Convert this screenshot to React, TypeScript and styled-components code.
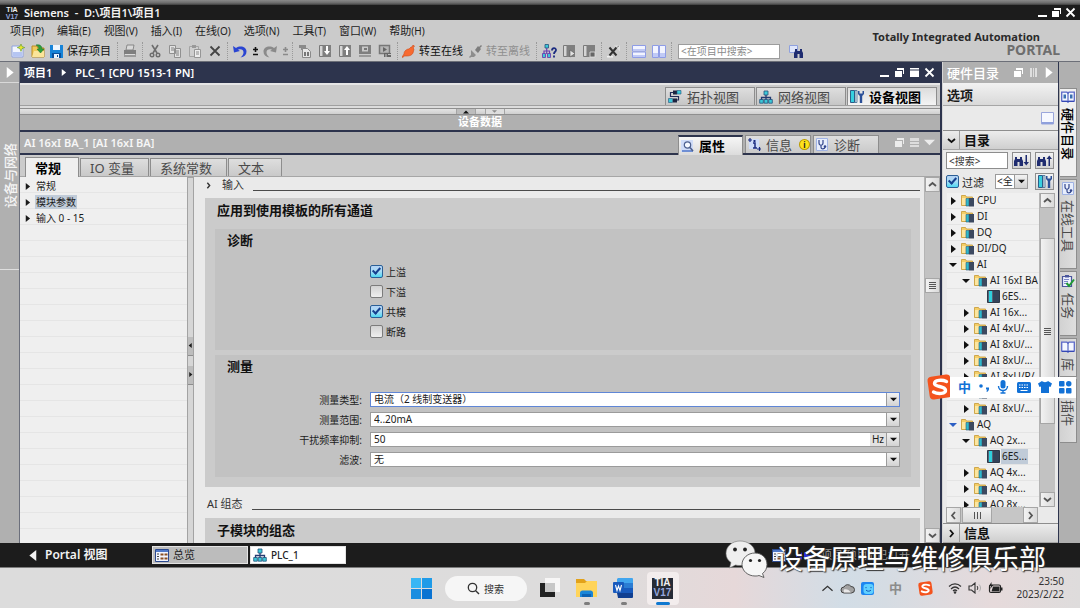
import React from 'react';
import styled, { createGlobalStyle, css } from 'styled-components';

const FONT = '"Noto Sans", "Open Sans", "Noto Sans CJK SC", sans-serif';
const NAVY = '#2d344d';

const GlobalStyle = createGlobalStyle`
  *, *::before, *::after { box-sizing: border-box; }
  html, body { margin: 0; padding: 0; }
  body { font-family: ${FONT}; font-size: 10px; color: #1c1c1c; background: #dcdcdc; }
  button, input, select { font-family: inherit; font-size: inherit; color: inherit; margin: 0; }
  button { padding: 0; border: 0; background: none; cursor: pointer; }
  svg { display: block; flex: none; }
  ul { list-style: none; margin: 0; padding: 0; }
  h1, h2, h3 { margin: 0; font-weight: 700; }
`;

/* ---------- shell ---------- */

const Screen = styled.div`
  position: relative;
  display: flex;
  flex-direction: column;
  height: 100vh;
  min-width: 960px;
  overflow: hidden;
`;

const DesktopEdge = styled.div`
  flex: none;
  height: 5px;
  background: linear-gradient(#8a8a8a, #6a6a6a 60%, #3c3c3c);
`;

const TitleBar = styled.header`
  flex: none;
  display: flex;
  align-items: center;
  gap: 5px;
  height: 15px;
  padding: 0 4px 0 5px;
  background: #1c1c1c;
  color: #f2f2f2;
`;

const WindowTitle = styled.h1`
  flex: 1;
  font-size: 11px;
  line-height: 15px;
  font-weight: 600;
  white-space: pre;
`;

const WindowButtons = styled.div`
  display: flex;
  align-items: center;
  gap: 3px;
  color: #fff;
`;

const TopBar = styled.div`
  flex: none;
  display: flex;
  justify-content: space-between;
  height: 42px;
  background: #cbcbcb;
  border-bottom: 1px solid #6c6f78;
`;

const TopLeft = styled.div`
  display: flex;
  flex-direction: column;
`;

const MenuRow = styled.nav`
  display: flex;
  align-items: center;
  gap: 13px;
  height: 21px;
  padding: 0 10px;
`;

const MenuItem = styled.button`
  font-size: 11px;
  line-height: 16px;
  white-space: nowrap;
  small { font-size: 10px; }
`;

const ToolRow = styled.div`
  display: flex;
  align-items: center;
  height: 20px;
  padding-left: 8px;
`;

const ToolButton = styled.button<{ $narrow?: boolean }>`
  display: flex;
  align-items: center;
  justify-content: center;
  width: ${p => (p.$narrow ? 10 : 20)}px;
  height: 18px;
`;

const ToolText = styled.button<{ $off?: boolean }>`
  display: flex;
  align-items: center;
  gap: 4px;
  font-size: 11px;
  line-height: 16px;
  padding: 0 4px 0 2px;
  white-space: nowrap;
  color: ${p => (p.$off ? '#8f8f8f' : '#111')};
`;

const ToolSep = styled.span`
  width: 1px;
  height: 18px;
  margin: 0 2px;
  border-left: 1px dotted #9a9a9a;
`;

const ProjectSearch = styled.input`
  width: 102px;
  height: 15px;
  margin: 0 6px 0 4px;
  padding: 0 2px;
  border: 1px solid #9c9c9c;
  background: #fff;
  &::placeholder { color: #8a8a8a; opacity: 1; }
`;

const Brand = styled.div`
  display: flex;
  flex-direction: column;
  padding: 10px 20px 0 0;
  white-space: nowrap;
`;

const BrandName = styled.span`
  padding-right: 20px;
  font-size: 11px;
  line-height: 14px;
  font-weight: 700;
  color: #2a2a2a;
`;

const BrandPortal = styled.span`
  align-self: flex-end;
  font-size: 14px;
  line-height: 12px;
  font-weight: 700;
  color: #6e6e6e;
`;

const Workspace = styled.div`
  flex: 1;
  min-height: 0;
  display: flex;
`;

/* ---------- left rail ---------- */

const LeftRail = styled.aside`
  flex: none;
  display: flex;
  flex-direction: column;
  width: 20px;
  background: #b0b0b0;
  border-right: 1px solid #6b6f7c;
`;

const RailOpen = styled.button`
  display: flex;
  align-items: center;
  justify-content: center;
  height: 21px;
  color: #fff;
  border-bottom: 1px solid #d9d9d9;
`;

const RailTab = styled.button`
  display: flex;
  align-items: center;
  justify-content: center;
  height: 187px;
  color: #f4f4f4;
  border-bottom: 1px solid #dedede;
  span {
    writing-mode: vertical-rl;
    text-orientation: sideways;
    transform: rotate(180deg);
    font-size: 13px;
    line-height: 16px;
    font-weight: 500;
  }
`;

/* ---------- centre ---------- */

const Center = styled.main`
  flex: 1;
  min-width: 0;
  display: flex;
  flex-direction: column;
  border-right: 2px solid ${NAVY};
`;

const EditorHeader = styled.div`
  flex: none;
  display: flex;
  align-items: center;
  justify-content: space-between;
  height: 21px;
  padding: 0 5px 0 4px;
  background: ${NAVY};
  color: #fff;
`;

const Crumbs = styled.div`
  display: flex;
  align-items: center;
  gap: 8px;
  font-size: 11px;
  line-height: 16px;
  font-weight: 600;
`;

const IconSet = styled.div<{ $gap?: number }>`
  display: flex;
  align-items: center;
  gap: ${p => p.$gap ?? 4}px;
`;

const ViewBar = styled.div`
  flex: none;
  display: flex;
  align-items: flex-end;
  justify-content: flex-end;
  gap: 1px;
  height: 23px;
  padding-right: 3px;
  background: #cbcbcb;
  border-top: 2px solid #e6e6e6;
  border-bottom: 1px solid #a0a0a0;
`;

const ViewTab = styled.button<{ $on?: boolean }>`
  display: flex;
  align-items: center;
  gap: 5px;
  width: 90px;
  height: 18px;
  padding-left: 2px;
  font-size: 13px;
  line-height: 16px;
  white-space: nowrap;
  border: 1px solid #8d8d8d;
  border-bottom: 0;
  background: ${p => (p.$on ? 'linear-gradient(#dcdcdc, #f4f4f4)' : 'linear-gradient(#dedede, #c6c6c6)')};
  color: ${p => (p.$on ? '#000' : '#4a4a4a')};
  font-weight: ${p => (p.$on ? 700 : 400)};
`;

const SplitBar = styled.div`
  flex: none;
  display: flex;
  justify-content: center;
  gap: 9px;
  height: 9px;
  padding-top: 3px;
  background: linear-gradient(#dcdcdc 2px, #8f8f8f 2px, #8f8f8f 3px, #e4e4e4 3px, #cfcfcf);
  border-bottom: 1px solid #8f8f8f;
`;

const SplitGrip = styled.button<{ $dim?: boolean }>`
  display: flex;
  align-items: center;
  justify-content: center;
  width: 20px;
  color: ${p => (p.$dim ? '#8c8c8c' : '#111')};
  background: ${p => (p.$dim ? '#dedede' : '#bdbdbd')};
  border: 1px solid #a4a4a4;
  border-width: 0 1px;
`;

const DataBar = styled.div`
  flex: none;
  height: 15px;
  background: #b0b0b0;
  color: #fff;
  font-size: 11px;
  line-height: 14px;
  font-weight: 700;
  text-align: center;
`;

const InspectorHeader = styled.div`
  flex: none;
  display: flex;
  align-items: flex-end;
  height: 25px;
  padding: 0 5px 0 4px;
  background: #b0b0b0;
  border-top: 2px solid ${NAVY};
  border-bottom: 2px solid ${NAVY};
`;

const InspectorTitle = styled.h2`
  flex: 1;
  align-self: center;
  font-size: 11px;
  line-height: 16px;
  font-weight: 600;
  color: #f6f6f6;
`;

const InspectorTabs = styled.div`
  display: flex;
  align-items: flex-end;
  gap: 2px;
  margin-right: 15px;
`;

const InspectorTab = styled.button<{ $on?: boolean }>`
  display: flex;
  align-items: center;
  gap: 5px;
  width: ${p => (p.$on ? 65 : 66)}px;
  height: 18px;
  padding-left: 2px;
  font-size: 13px;
  line-height: 16px;
  white-space: nowrap;
  border: 1px solid #8d8d8d;
  border-bottom: 0;
  color: #4a4a4a;
  background: linear-gradient(#dedede, #c9c9c9);
  ${p => p.$on && css`
    height: 20px;
    margin-bottom: -2px;
    border-top: 2px solid ${NAVY};
    color: #000;
    font-weight: 700;
    background: linear-gradient(#f6f6f6, #dcdcdc);
  `}
`;

const InfoDot = styled.span`
  display: flex;
  align-items: center;
  justify-content: center;
  width: 11px;
  height: 11px;
  margin-left: 2px;
  border-radius: 50%;
  border: 1px solid #b99a00;
  background: #ffe11a;
  color: #222;
  font-size: 8px;
  line-height: 8px;
  font-weight: 700;
`;

const HeaderTools = styled(IconSet)`
  align-self: center;
  color: #ececec;
`;

const NavTabs = styled.div`
  flex: none;
  display: flex;
  align-items: flex-end;
  gap: 1px;
  height: 22px;
  padding-left: 5px;
  background: #cbcbcb;
  border-bottom: 1px solid #a6a6a6;
`;

const NavTab = styled.button<{ $on?: boolean }>`
  height: 18px;
  min-width: 54px;
  padding: 0 14px 0 9px;
  font-size: 13px;
  line-height: 16px;
  text-align: left;
  white-space: nowrap;
  border: 1px solid #8d8d8d;
  border-bottom: 0;
  color: #4a4a4a;
  background: linear-gradient(#dedede, #c9c9c9);
  ${p => p.$on && css`
    height: 20px;
    margin-bottom: -1px;
    color: #000;
    font-weight: 700;
    background: #efefef;
  `}
`;

const InspectorBody = styled.div`
  flex: 1;
  min-height: 0;
  display: flex;
  background: #eaeaea;
`;

const NavTree = styled.ul`
  flex: none;
  width: 167px;
  padding-top: 1px !important;
  background: repeating-linear-gradient(#efefef 0, #efefef 15px, #e5e5e5 15px, #e5e5e5 16px);
`;

const NavItem = styled.li`
  display: flex;
  align-items: center;
  gap: 4px;
  height: 16px;
  padding-left: 4px;
`;

const NavLabel = styled.button<{ $on?: boolean }>`
  padding: 0 1px;
  line-height: 14px;
  white-space: nowrap;
  background: ${p => (p.$on ? '#c0cbd8' : 'transparent')};
`;

const SideSplit = styled.div`
  flex: none;
  display: flex;
  flex-direction: column;
  justify-content: center;
  gap: 10px;
  width: 7px;
  border: 1px solid #a3a3a3;
  border-width: 1px 1px 0;
  background: #d6d6d6;
`;

const SideGrip = styled.button`
  display: flex;
  align-items: center;
  justify-content: center;
  height: 19px;
  border-bottom: 1px solid #8d8d8d;
  background: #bdbdbd;
`;

const Page = styled.div`
  flex: 1;
  min-width: 0;
  overflow: hidden;
  padding: 0 4px 0 11px;
`;

const SectionHead = styled.div<{ $later?: boolean }>`
  display: flex;
  align-items: center;
  height: 16px;
  margin: ${p => (p.$later ? '9px 0 6px' : '0 0 5px')};
  padding-left: 2px;
  color: #333;
  font-size: 11px;
  line-height: 16px;
  white-space: nowrap;
  svg { margin: 0 10px 0 -2px; }
`;

const Rule = styled.span`
  flex: 1;
  height: 11px;
  margin-left: 9px;
  border-bottom: 1px solid #4a4a4a;
`;

const Panel = styled.section`
  padding: 0 9px 10px 10px;
  background: #cbcbcb;
`;

const PanelTitle = styled.h2`
  padding: 0 2px 7px;
  font-size: 13px;
  line-height: 24px;
  white-space: nowrap;
  color: #111;
`;

const SubPanel = styled.div`
  padding-bottom: 9px;
  background: #c2c2c2;
  & + & { margin-top: 5px; padding-bottom: 8px; }
`;

const SubTitle = styled.h3`
  padding-left: 12px;
  font-size: 13px;
  line-height: 22px;
  color: #111;
`;

const CheckList = styled.div`
  padding: 10px 0 0 155px;
`;

const CheckLabel = styled.label`
  display: flex;
  align-items: center;
  gap: 3px;
  height: 20px;
`;

const CheckBox = styled.input.attrs({ type: 'checkbox' })`
  appearance: none;
  display: flex;
  justify-content: center;
  flex: none;
  width: 13px;
  height: 13px;
  border: 1px solid #7c7c7c;
  border-radius: 2px;
  background: linear-gradient(#d2d2d2, #efefef);
  &:checked {
    border-color: #2b5f96;
    background: linear-gradient(#b5d3f5, #a8dcf5 50%, #4fd8f2);
  }
  &:checked::after {
    content: '';
    width: 5px;
    height: 8px;
    border: solid #17408f;
    border-width: 0 2px 2px 0;
    transform: rotate(42deg);
  }
`;

const Form = styled.div`
  padding: 12px 11px 0 0;
`;

const FormRow = styled.div`
  display: grid;
  grid-template-columns: 147px 1fr;
  gap: 8px;
  align-items: center;
  height: 20px;
  label { text-align: right; }
`;

const SelectBox = styled.div<{ $focus?: boolean }>`
  display: flex;
  align-items: stretch;
  height: 15px;
  background: #fff;
  border: 1px solid ${p => (p.$focus ? '#5f86d6' : '#9b9b9b')};
`;

const Select = styled.select`
  appearance: none;
  flex: 1;
  min-width: 0;
  padding: 0 3px;
  border: 0;
  outline: 0;
  background: transparent;
  line-height: 13px;
`;

const Unit = styled.span`
  width: 16px;
  background: #e2e2e2;
  line-height: 13px;
  text-align: center;
`;

const DropArrow = styled.span`
  display: flex;
  align-items: center;
  justify-content: center;
  flex: none;
  width: 13px;
  border-left: 1px solid #9b9b9b;
  background: linear-gradient(#f2f2f2, #d3d3d3);
  color: #111;
`;

/* ---------- scroll bars ---------- */

const VScroll = styled.div`
  flex: none;
  display: flex;
  flex-direction: column;
  width: 16px;
  background: #c2c2c2;
  border-left: 1px solid #b4b4b4;
`;

const ScrollSpace = styled.span<{ $size?: number }>`
  flex: ${p => (p.$size ? `0 0 ${p.$size}px` : '1')};
`;

const ScrollButton = styled.button<{ $size?: number }>`
  display: flex;
  align-items: center;
  justify-content: center;
  flex: none;
  width: 15px;
  height: ${p => p.$size ?? 15}px;
  border: 1px solid #a6a6a6;
  background: linear-gradient(90deg, #f2f2f2, #dadada);
  color: #555;
`;

const HScroll = styled.div`
  flex: none;
  display: flex;
  width: 92px;
  height: 16px;
  background: #c6c6c6;
`;

const HThumb = styled.button`
  display: flex;
  align-items: center;
  justify-content: center;
  width: 30px;
  margin: 0 auto 0 1px;
  border: 1px solid #a6a6a6;
  background: linear-gradient(#f2f2f2, #dadada);
  color: #555;
`;

/* ---------- right catalogue ---------- */

const Catalog = styled.aside`
  flex: none;
  display: flex;
  flex-direction: column;
  width: 117px;
  background: #eaeaea;
  border-left: 1px solid #d5d5d5;
  border-right: 1px solid ${NAVY};
`;

const CatalogHeader = styled.div`
  flex: none;
  display: flex;
  align-items: center;
  justify-content: space-between;
  height: 21px;
  padding: 0 4px;
  background: #b0b0b0;
  color: #fff;
  font-size: 13px;
  line-height: 18px;
  font-weight: 500;
`;

const OptionBar = styled.div`
  flex: none;
  height: 23px;
  padding-left: 4px;
  font-size: 13px;
  line-height: 24px;
  font-weight: 700;
  background: linear-gradient(#f2f2f2, #d9d9d9);
  border-bottom: 1px solid #a6a6a6;
`;

const OptionTools = styled.div`
  flex: none;
  display: flex;
  align-items: center;
  justify-content: flex-end;
  height: 24px;
  padding-right: 4px;
`;

const FoldHeader = styled.button`
  flex: none;
  display: flex;
  align-items: stretch;
  width: 100%;
  height: 20px;
  font-size: 13px;
  line-height: 18px;
  font-weight: 700;
  background: linear-gradient(#ececec, #cfcfcf);
  border-top: 1px solid #8d8d8d;
  border-bottom: 1px solid #a6a6a6;
  color: #111;
`;

const FoldMark = styled.span`
  display: flex;
  align-items: center;
  justify-content: center;
  width: 17px;
  margin-right: 4px;
  border-right: 1px solid #9d9d9d;
`;

const CatalogRow = styled.div<{ $low?: boolean }>`
  flex: none;
  display: flex;
  align-items: center;
  gap: 4px;
  height: ${p => (p.$low ? 16 : 21)}px;
  padding: 0 4px 0 3px;
`;

const CatalogSearch = styled.input`
  flex: 1;
  min-width: 0;
  height: 17px;
  padding: 0 2px;
  border: 1px solid #8d8d8d;
  background: #fff;
  &::placeholder { color: #333; opacity: 1; }
`;

const SmallButton = styled.button`
  display: flex;
  align-items: center;
  justify-content: center;
  flex: none;
  width: 19px;
  height: 17px;
  border: 1px solid #8d8d8d;
  background: linear-gradient(#f4f4f4, #d3d3d3);
`;

const FilterLabel = styled.label`
  flex: 1;
  display: flex;
  align-items: center;
  gap: 3px;
  font-size: 11px;
  white-space: nowrap;
`;

const FilterSelect = styled(SelectBox)`
  flex: none;
  width: 33px;
  margin-right: 3px;
  select { padding: 0 0 0 1px; }
`;

const TreeWrap = styled.div`
  flex: 1;
  min-height: 0;
  display: flex;
  padding: 1px 3px 0 4px;
`;

const DeviceTree = styled.ul`
  flex: 1;
  min-width: 0;
  overflow: hidden;
  background: #f0f0f0;
`;

const DeviceRow = styled.li<{ $level: number }>`
  display: flex;
  align-items: center;
  height: 16px;
  padding-left: ${p => 2 + p.$level * 13}px;
  border-bottom: 1px solid #e4e4e4;
`;

const Toggle = styled.button<{ $blue?: boolean }>`
  display: flex;
  align-items: center;
  justify-content: center;
  flex: none;
  width: 8px;
  height: 12px;
  margin-right: 4px;
  color: ${p => (p.$blue ? '#2c5fc4' : '#111')};
`;

const DeviceName = styled.span<{ $on?: boolean }>`
  padding: 0 1px;
  margin-left: 1px;
  line-height: 15px;
  white-space: nowrap;
  background: ${p => (p.$on ? '#c0cbd8' : 'transparent')};
`;

const TaskCards = styled.aside`
  flex: none;
  display: flex;
  flex-direction: column;
  gap: 2px;
  width: 21px;
  padding: 26px 3px 0 1px;
  background: #b0b0b0;
`;

const TaskCard = styled.button<{ $on?: boolean; $short?: boolean }>`
  display: flex;
  flex-direction: column;
  align-items: center;
  gap: 5px;
  padding: 2px 0 ${p => (p.$short ? 5 : 16)}px;
  border: 1px solid #8d8d8d;
  border-left: 0;
  background: ${p => (p.$on ? '#f0f0f0' : 'linear-gradient(90deg, #d2d2d2, #dedede)')};
  color: ${p => (p.$on ? '#000' : '#4a4a4a')};
  font-weight: ${p => (p.$on ? 500 : 400)};
  span {
    writing-mode: vertical-rl;
    text-orientation: sideways;
    font-size: 13px;
    line-height: 16px;
  }
`;

/* ---------- portal bar ---------- */

const PortalBar = styled.footer`
  flex: none;
  display: flex;
  align-items: center;
  height: 25px;
  padding: 0 4px 0 28px;
  background: #1c1c1c;
  border-bottom: 1px solid #7c7c7c;
  color: #f2f2f2;
`;

const PortalLink = styled.button`
  display: flex;
  align-items: center;
  gap: 6px;
  width: 124px;
  font-size: 12px;
  line-height: 16px;
  font-weight: 600;
  color: #f2f2f2;
  white-space: nowrap;
`;

const EditorTab = styled.button<{ $on?: boolean }>`
  display: flex;
  align-items: center;
  gap: 4px;
  width: 96px;
  height: 18px;
  margin-right: 2px;
  padding-left: 2px;
  border: 1px solid #e4e4e4;
  background: ${p => (p.$on ? '#fff' : '#bcbcbc')};
  color: #222;
  font-size: ${p => (p.$on ? 10 : 11)}px;
  line-height: 14px;
  font-weight: ${p => (p.$on ? 500 : 400)};
`;

const StatusText = styled.div`
  display: flex;
  align-items: center;
  gap: 10px;
  margin: 0 166px 0 auto;
  font-size: 11px;
  line-height: 16px;
  white-space: nowrap;
  color: #9a9a9a;
`;

/* ---------- Windows task bar ---------- */

const TaskBar = styled.footer`
  flex: none;
  display: grid;
  grid-template-columns: 1fr auto 1fr;
  align-items: center;
  height: 40px;
  padding: 0 16px 0 22px;
  background: linear-gradient(90deg, #dcdcdc 0%, #dddcdc 56%, #e6d8d9 68%, #d2dde6 78%, #d5dce3 82%, #e6dadb 92%, #dedcdc 100%);
`;

const Dock = styled.div`
  grid-column: 2;
  display: flex;
  align-items: center;
  gap: 9px;
`;

const DockIcon = styled.button<{ $tile?: boolean; $mark?: string }>`
  position: relative;
  display: flex;
  align-items: center;
  justify-content: center;
  width: ${p => (p.$tile ? 32 : 28)}px;
  height: 33px;
  border-radius: 4px;
  background: ${p => (p.$tile ? '#f3eded' : 'transparent')};
  &::after {
    content: '';
    position: absolute;
    bottom: 0;
    width: ${p => (p.$tile ? 14 : 6)}px;
    height: 3px;
    border-radius: 2px;
    background: ${p => p.$mark ?? 'transparent'};
  }
`;

const SearchPill = styled.button`
  display: flex;
  align-items: center;
  justify-content: center;
  gap: 4px;
  width: 82px;
  height: 25px;
  border-radius: 13px;
  background: #f6f6f6;
  font-size: 10px;
  color: #333;
`;

const TiaMark = styled.span<{ $small?: boolean }>`
  display: flex;
  flex-direction: column;
  justify-content: center;
  align-items: center;
  width: ${p => (p.$small ? 14 : 21)}px;
  height: ${p => (p.$small ? 14 : 21)}px;
  background: ${p => (p.$small ? 'transparent' : '#262b36')};
  color: #f0f0f0;
  font-family: "Liberation Sans", sans-serif;
  font-size: ${p => (p.$small ? 7 : 10)}px;
  line-height: ${p => (p.$small ? 7 : 10)}px;
  font-weight: 700;
  b { color: #94a6dd; }
`;

const Tray = styled.div`
  display: flex;
  align-items: center;
  justify-content: flex-end;
  gap: 6px;
  color: #333;
`;

const TrayGap = styled.span`
  width: 3px;
`;

const TrayGlyph = styled.span`
  width: 14px;
  color: #8b8b8b;
  font-size: 13px;
  line-height: 16px;
  font-weight: 700;
  text-align: center;
`;

const Clock = styled.time`
  display: block;
  margin-left: 8px;
  font-size: 10px;
  line-height: 13px;
  text-align: right;
  color: #333;
`;

/* ---------- floating layers ---------- */

const ImeBar = styled.div`
  position: absolute;
  right: 4px;
  top: 374px;
  display: flex;
  align-items: center;
`;

const ImeTools = styled.div`
  display: flex;
  align-items: center;
  justify-content: space-between;
  width: 126px;
  height: 21px;
  margin-left: -3px;
  padding: 0 4px 0 8px;
  background: #fff;
  color: #1271d6;
  font-size: 13px;
  line-height: 16px;
  font-weight: 700;
`;

const Watermark = styled.div`
  position: absolute;
  right: 34px;
  bottom: 28px;
  display: flex;
  align-items: center;
  gap: 8px;
  color: #fff;
  font-size: 27px;
  line-height: 42px;
  white-space: nowrap;
  text-shadow: 1px 1px 1px #333, 0 0 1px #555;
`;

/* ---------- icons ---------- */

type TriProps = { dir: 'right' | 'left' | 'down' | 'up'; w?: number; thin?: boolean };
const Tri = ({ dir, w = 8 }: TriProps) => {
  const d = {
    right: 'M2 0 L7 4 L2 8Z',
    left: 'M6 0 L1 4 L6 8Z',
    down: 'M0 2 L8 2 L4 6Z',
    up: 'M0 6 L8 6 L4 2Z',
  }[dir];
  return <svg width={w} height={w} viewBox="0 0 8 8"><path d={d} fill="currentColor" /></svg>;
};

const Chevron = ({ dir, w = 9, thin }: TriProps) => {
  const d = {
    right: 'M3 1 L6 4.5 L3 8',
    left: 'M6 1 L3 4.5 L6 8',
    down: 'M1 3 L4.5 6 L8 3',
    up: 'M1 6 L4.5 3 L8 6',
  }[dir];
  return <svg width={w} height={w} viewBox="0 0 9 9"><path d={d} fill="none" stroke="currentColor" strokeWidth={thin ? 0.9 : 1.8} /></svg>;
};

const Minus = () => <svg width="11" height="11" viewBox="0 0 11 11"><path d="M1 8h9v2H1z" fill="currentColor" /></svg>;
const Cascade = () => (
  <svg width="11" height="11" viewBox="0 0 11 11">
    <path d="M3 1h7v6H9V3H3z" fill="currentColor" />
    <path d="M1 4h7v6H1z" fill="currentColor" />
  </svg>
);
const Maxi = () => (
  <svg width="11" height="11" viewBox="0 0 11 11">
    <path d="M1 1h9v1.5H1zM1 3.5h9V10H1z" fill="currentColor" />
  </svg>
);
const Cross = () => <svg width="11" height="11" viewBox="0 0 11 11"><path d="M1.5 1.5l8 8M9.5 1.5l-8 8" stroke="currentColor" strokeWidth="1.8" /></svg>;
const Lines = ({ v }: { v?: boolean }) => (
  <svg width="9" height="9" viewBox="0 0 9 9">
    <path d={v ? 'M1.5 1v7M4.5 1v7M7.5 1v7' : 'M1 1.5h7M1 3.5h7M1 5.5h7M1 7.5h7'} stroke="currentColor" strokeWidth="1" />
  </svg>
);
const Bars = () => (
  <svg width="11" height="11" viewBox="0 0 11 11">
    <path d="M1 1h9v3H1zM1 5h9v2H1zM1 8h9v2H1z" fill="currentColor" opacity=".75" />
  </svg>
);
const Columns = () => (
  <svg width="9" height="11" viewBox="0 0 9 11">
    <path d="M1 1h2v9H1zM4 1h1v9H4zM6 1h2v9H6z" fill="currentColor" opacity=".6" />
  </svg>
);

const NewIcon = () => (
  <svg width="14" height="14" viewBox="0 0 14 14">
    <path d="M1 2h8l3 3v8H1z" fill="#f3f6ff" stroke="#8fa2e0" />
    <path d="M2 8h9v4.500H2z" fill="#b5c5f2" />
    <path d="M10 0l1 2.500 2.800 1.100-2.800 1L10 7.400l-1.100-2.800L6.200 3.600l2.700-1.100z" fill="#e9e52c" stroke="#5c9a2c" strokeWidth=".6" />
  </svg>
);
const OpenIcon = () => (
  <svg width="14" height="14" viewBox="0 0 14 14">
    <path d="M1 2h5l1 2h6v9H1z" fill="#f0c95a" stroke="#b88a22" />
    <path d="M1 13l2-6h10v6z" fill="#fbe59a" />
    <path d="M5 1c4-1 6 1 6 4h2l-3.500 4L6 5h2c0-2-1-3-3-4z" fill="#2f9e3a" stroke="#17702a" strokeWidth=".5" />
  </svg>
);
const SaveIcon = () => (
  <svg width="13" height="13" viewBox="0 0 13 13">
    <path d="M0 0h13v13H0z" fill="#1683d8" />
    <path d="M3 0h7v5H3z" fill="#eef6ff" />
    <path d="M2 8h9v5H2z" fill="#0a4f9c" /><path d="M4 9h5v4H4z" fill="#eaf4ff" /><path d="M7 10h1v2H7z" fill="#0a4f9c" />
  </svg>
);
const PrintIcon = () => (
  <svg width="14" height="14" viewBox="0 0 14 14">
    <path d="M4 1h7l-1 5H3z" fill="#d9d9d9" stroke="#777" strokeWidth=".8" />
    <path d="M1 6h12v4H1z" fill="#7f7f7f" /><path d="M1 10h12v3H1z" fill="#9b9b9b" /><path d="M2 10.500h10" stroke="#ddd" />
  </svg>
);
const CutIcon = () => (
  <svg width="12" height="14" viewBox="0 0 12 14">
    <path d="M3 1l5 8M9 1L4 9" stroke="#6d6d6d" strokeWidth="1.600" />
    <circle cx="3" cy="11" r="1.800" fill="none" stroke="#6d6d6d" strokeWidth="1.400" /><circle cx="9" cy="11" r="1.800" fill="none" stroke="#6d6d6d" strokeWidth="1.400" />
  </svg>
);
const CopyIcon = () => (
  <svg width="14" height="13" viewBox="0 0 14 13">
    <path d="M1.500.500h6v8h-6zM6.500 3.500h6v9h-6z" fill="#e3e3e3" stroke="#909090" />
    <path d="M3 3h3M3 5h3M8 6h3M8 8h3M8 10h3" stroke="#828282" />
  </svg>
);
const PasteIcon = () => (
  <svg width="14" height="13" viewBox="0 0 14 13">
    <path d="M1.500 1.500h9v10h-9z" fill="#cfcfcf" stroke="#a4a4a4" /><path d="M4 0h4v3H4z" fill="#999" />
    <path d="M6.500 4.500h6v8h-6z" fill="#ededed" stroke="#969696" /><path d="M8 7h3M8 9h3" stroke="#8a8a8a" />
  </svg>
);
const DeleteIcon = () => <svg width="12" height="12" viewBox="0 0 12 12"><path d="M1.500 1.500l9 9M10.500 1.500l-9 9" stroke="#444" strokeWidth="1.800" /></svg>;
const UndoIcon = ({ redo }: { redo?: boolean }) => (
  <svg width="14" height="13" viewBox="0 0 14 13">
    <path
      transform={redo ? 'translate(14 0) scale(-1 1)' : undefined}
      d="M0 1l1 6.500 6-1.500-2-1.300c3-1 5.500 0 5.500 2.500 0 2-1 3.500-3 5.300 4-.7 6-2.800 6-6C13.500 2 7.500 0 3 3z"
      fill={redo ? '#8a8a8a' : '#2a45d2'}
    />
  </svg>
);
const PlusMinus = ({ off }: { off?: boolean }) => (
  <svg width="7" height="10" viewBox="0 0 7 10"><path d="M3.500 1v5M1 3.500h5M1 8.500h5" stroke={off ? '#8a8a8a' : '#111'} strokeWidth="1.600" /></svg>
);
const GrayTool = ({ kind }: { kind: 'dl' | 'ul' | 'compile' | 'sim' | 'rt' | 'start' | 'stop' }) => (
  <svg width="14" height="14" viewBox="0 0 14 14">
    {kind === 'compile' ? (
      <>
        <path d="M1 1h7v3H1z" fill="#8a8a8a" /><path d="M3 5h4" stroke="#8a8a8a" strokeWidth="2" />
        <path d="M4.500 4.500h5l3 3v6h-8z" fill="#e6e6e6" stroke="#8a8a8a" /><path d="M6 8h2v4H6zM9 8h2v4H9z" fill="#777" />
      </>
    ) : kind === 'sim' ? (
      <>
        <path d="M1 1h12v9H1z" fill="#7f7f7f" /><path d="M4 2.500h6v5H4z" fill="#c9c9c9" /><path d="M6 4h3v2H6z" fill="#777" /><path d="M1 11h12v2H1z" fill="#999" />
      </>
    ) : kind === 'rt' ? (
      <>
        <path d="M1.500 1.500h10v8h-10z" fill="#b5b5b5" stroke="#777" strokeWidth="1.500" /><path d="M5 3l4 2.500L5 8z" fill="#666" /><path d="M6 9h7v4H6z" fill="#666" /><path d="M8 10v3M10 10.500h3" stroke="#ddd" strokeWidth=".8" />
      </>
    ) : (
      <>
        <path d="M1.500 1.500h3.500v11H1.500z" fill="#d5d5d5" stroke="#7a7a7a" /><path d="M5 1h8v12H5z" fill="#7f7f7f" />
        {kind === 'dl' && <path d="M8 2h2v5h2l-3 4-3-4h2z" fill="#fff" />}
        {kind === 'ul' && <path d="M8 11h2V6h2L9 2 6 6h2z" fill="#fff" />}
        {kind === 'start' && <path d="M8 6l5 3.500L8 13z" fill="#e2e2e2" stroke="#555" strokeWidth=".6" />}
        {kind === 'stop' && <path d="M8 8h5v5H8z" fill="#666" stroke="#e2e2e2" strokeWidth=".8" />}
      </>
    )}
  </svg>
);
const PlugIcon = ({ off }: { off?: boolean }) => (
  <svg width="13" height="13" viewBox="0 0 13 13">
    {off ? (
      <>
        <path d="M6 5l3-4 1 1 2-2 1 1-2 2 1 1-3 4z" fill="#7d7d7d" />
        <path d="M0 12l2-2V5l2 2 3 3-2 2H2l-1 1z" fill="#8d8d8d" />
      </>
    ) : (
      <path d="M0 12l2-3c0-2 1-4 4-5l1 0 2-2 1 0 1-2 1.500 1L11 3l1 1-1 4c-1 2-3 3-6 3l-3 0-1 1.500z" fill="#f76a30" stroke="#d04a18" strokeWidth=".6" />
    )}
  </svg>
);
const LinkIcon = () => <svg width="15" height="11" viewBox="0 0 15 11"><path d="M0 6h3l3-4v8L3 7H0zM15 5h-3L8 2v7l4-2h3z" fill="#2a2fe0" /></svg>;
const NetIcon = ({ w = 14 }: { w?: number }) => (
  <svg width={w} height={w} viewBox="0 0 14 14">
    <path d="M5 1h4v4H5z" fill="#3cc9d8" stroke="#24507c" strokeWidth=".8" />
    <path d="M7 5v3M2.500 10V7.500h9V10M7 7v3" stroke="#243a70" strokeWidth="1.300" fill="none" />
    <path d="M.7 9.500h3.600v3.700H.7zM5.200 9.500h3.600v3.700H5.200zM9.700 9.500h3.600v3.700H9.700z" fill="#3cc9d8" stroke="#24507c" strokeWidth=".8" />
  </svg>
);
const AccessIcon = () => (
  <svg width="15" height="14" viewBox="0 0 15 14">
    <path d="M3 .5h3.500v3.500H3z" fill="#3cc9d8" stroke="#24507c" strokeWidth=".8" />
    <path d="M4.700 4v6M2 10V7h5.500v3" stroke="#6a3fb0" strokeWidth="1.200" fill="none" />
    <path d="M.5 9.500h3v4h-3zM5.500 9.500h3v4h-3z" fill="#3cc9d8" stroke="#6a3fb0" strokeWidth=".9" />
    <path d="M10 6.500c0-3 4-3 4-.5 0 2-2 1.500-2 4M12 11.500v2" stroke="#1c2c80" strokeWidth="1.800" fill="none" />
  </svg>
);
const TopoIcon = () => (
  <svg width="14" height="13" viewBox="0 0 14 13">
    <path d="M6 2.500H2.500V6.500h8V10H6" stroke="#222c58" strokeWidth="1.200" fill="none" />
    <path d="M5 .5h4v4H5zM5 8.500h4v4H5z" fill="#1c2440" /><path d="M9 .5h4v3.500H9zM.5 8.500h4v4h-4z" fill="#3cc9d8" stroke="#24507c" strokeWidth=".6" />
  </svg>
);
const DeviceIcon = () => (
  <svg width="14" height="13" viewBox="0 0 14 13">
    <path d="M.5.500h4v12h-4z" fill="#36cfe0" stroke="#2c5d88" /><path d="M5 .5h2v12H5z" fill="#dfe6f0" stroke="#2c5d88" strokeWidth=".7" />
    <path d="M8 1v3l1.800 2v7h2.400V6L14 4V1h-1.500v2.500h-3V1z" fill="#2a4f98" />
  </svg>
);
const WinSplit = ({ v }: { v?: boolean }) => (
  <svg width="14" height="13" viewBox="0 0 14 13">
    <path d={v ? 'M.5.500h6v12h-6zM7.500.500h6v12h-6z' : 'M.5.500h13v5.500H.5zM.5 7h13v5.500H.5z'} fill="#f2f4ff" stroke="#8e9ce6" />
    <path d={v ? 'M1 8h5v4H1zM8 8h5v4H8z' : 'M1 4h12v1.500H1zM1 10h12v2H1z'} fill="#c0caf6" />
  </svg>
);
const Binoc = ({ arrow, sheet }: { arrow?: 'down' | 'up'; sheet?: boolean }) => (
  <svg width="15" height="13" viewBox="0 0 15 13">
    {sheet && <path d="M.5.500h8v7h-8z" fill="#dfe6fb" stroke="#8fa1de" />}
    <g transform={sheet ? 'translate(5 3)' : 'translate(0 2)'} fill="#1f2c70">
      <path d="M1 1h2v2h3V1h2v2l1 2v5H5.500V6h-2v4H0V5l1-2z" />
    </g>
    {arrow && <path d={arrow === 'down' ? 'M11.500 1H13v7h2l-2.750 3.500L9.500 8h2z' : 'M11.500 12H13V5h2l-2.750-3.500L9.500 5h2z'} fill="#1f2c70" />}
  </svg>
);
const CrossRef = () => (
  <svg width="14" height="13" viewBox="0 0 14 13">
    <path d="M7 .5h6v6" fill="#e0e0e0" /><path d="M0 11h6v1.500H0z" fill="#eee" />
    <path d="M2.500 2.500l7 8M9.500 2.500l-7 8" stroke="#333" strokeWidth="2" /><path d="M9 3l3-2" stroke="#888" />
  </svg>
);
const PropIcon = () => (
  <svg width="13" height="13" viewBox="0 0 13 13">
    <path d="M0 0h12v12H0z" fill="#cfdcf8" /><path d="M1 10h11v2H1z" fill="#6f8fd4" />
    <circle cx="6.500" cy="5" r="3.200" fill="#f4f8ff" stroke="#4c5f8e" strokeWidth="1.200" /><path d="M9 7.500l3 3.500" stroke="#4c5f8e" strokeWidth="1.600" />
  </svg>
);
const InfoIcon = () => (
  <svg width="13" height="13" viewBox="0 0 13 13">
    <path d="M1 1h10v10H1z" fill="#cfdcf8" /><path d="M0 2h4M2 0v4M9 11h4M11.500 9v4" stroke="#1c2c80" strokeWidth="1.200" />
    <path d="M5 5h2v5M5 10h4" stroke="#1c2c80" strokeWidth="1.500" fill="none" /><path d="M5.500 2h2v2h-2z" fill="#1c2c80" />
  </svg>
);
const DiagIcon = () => (
  <svg width="13" height="13" viewBox="0 0 13 13">
    <path d="M.5.500h11v12H.5z" fill="#e8eefc" stroke="#9fb2e4" />
    <path d="M3 2v3c0 3 4 3 4 0V2M5 7v2c0 3 4 2 4 0" stroke="#33468c" strokeWidth="1.200" fill="none" /><circle cx="9" cy="8.500" r="1.300" fill="#33468c" />
  </svg>
);
const BookIcon = ({ chips }: { chips?: boolean }) => (
  <svg width="14" height="12" viewBox="0 0 14 12">
    <path d="M.7 1.200h5.300l1 1 1-1h5.300v9H8l-1 1-1-1H.7z" fill="#f4f7ff" stroke="#5b68c8" strokeWidth="1.300" /><path d="M7 2v8M1 10.500h12" stroke="#3548b4" />
    {chips && <path d="M2.500 3.500h2.500v4H2.500zM9 3.500h2.500v4H9z" fill="#3a6fb0" />}
  </svg>
);
const TaskIcon = () => (
  <svg width="14" height="14" viewBox="0 0 14 14">
    <path d="M1.500 2.500h9v10h-9z" fill="#eef2ff" stroke="#4a569c" strokeWidth="1.200" /><path d="M4 1h4v2.500H4z" fill="#4a569c" /><path d="M3 5.500h5M3 7.500h4M3 9.500h3" stroke="#7d89c8" />
    <path d="M5.500 9l2.500 3 5-6.500" stroke="#1f9a34" strokeWidth="2" fill="none" />
  </svg>
);
const PaneIcon = () => <svg width="13" height="13" viewBox="0 0 13 13"><path d="M.5.500h12v11.500H.5z" fill="#f6f8ff" stroke="#9aa6dc" /><path d="M1 10h11v2H1z" fill="#8fa0dc" /></svg>;
const FolderIcon = () => (
  <svg width="14" height="13" viewBox="0 0 14 13">
    <path d="M.5 1.500h4l1 1.500h6v8.500H.5z" fill="#f5cf67" stroke="#c59832" strokeWidth=".8" /><path d="M1 4h7v7H1z" fill="#fce6a0" />
    <path d="M5 4.500h3V12H5z" fill="#2fb9cc" stroke="#2d5b78" strokeWidth=".6" /><path d="M8 4h5v8.500H8z" fill="#3c4960" />
  </svg>
);
const ModuleIcon = () => (
  <svg width="13" height="13" viewBox="0 0 13 13">
    <path d="M.5.500h12v12H.5z" fill="#56657a" stroke="#2e3949" /><path d="M2 1h3v11H2z" fill="#2fd0de" /><path d="M6 1h6v11H6z" fill="#34435a" />
  </svg>
);
const OverviewIcon = () => (
  <svg width="14" height="13" viewBox="0 0 14 13">
    <path d="M.5.500h13v12H.5z" fill="#f3f6ff" stroke="#2c4a90" /><path d="M1 1h12v2H1z" fill="#4f78c8" />
    <path d="M2 5h2M2 7.500h2M2 10h2" stroke="#444" /><path d="M5.500 4.500h3v2h-3zM9.500 4.500h3v2h-3zM5.500 8.500h3v2h-3zM9.500 8.500h3v2h-3z" fill="#8a4f22" />
  </svg>
);
const SogouIcon = ({ w }: { w: number }) => (
  <svg width={w} height={w} viewBox="0 0 26 26">
    <rect x="1.500" y="1.500" width="23" height="23" rx="4" fill="#f4531d" transform="rotate(-8 13 13)" />
    <path d="M19.500 7.500C15 5.500 7.500 6 7.500 9.500S18 12 18.500 16s-7.500 4.500-12 2" stroke="#fff" strokeWidth="3.400" fill="none" strokeLinecap="round" />
  </svg>
);
const MicIcon = () => (
  <svg width="12" height="14" viewBox="0 0 12 14"><rect x="3.500" y="0" width="5" height="8.500" rx="2.500" fill="currentColor" /><path d="M1.500 6c0 6 9 6 9 0M6 10.500V13M3.500 13h5" stroke="currentColor" strokeWidth="1.400" fill="none" /></svg>
);
const KeyIcon = () => (
  <svg width="14" height="11" viewBox="0 0 14 11"><rect width="14" height="11" rx="1.500" fill="currentColor" /><path d="M2 3h10M2 5.500h10" stroke="#fff" strokeDasharray="1.500 1" /><path d="M3.500 8.500h7" stroke="#fff" /></svg>
);
const ShirtIcon = () => <svg width="14" height="12" viewBox="0 0 14 12"><path d="M4 0c1 1.500 5 1.500 6 0l4 2.500-1.500 3.500-1.500-.5V12H3V5.500L1.500 6 0 2.500z" fill="currentColor" /></svg>;
const AppsIcon = () => (
  <svg width="13" height="13" viewBox="0 0 13 13"><g fill="currentColor"><rect width="5.500" height="5.500" rx="1" /><rect x="7" width="5.500" height="5.500" rx="2.700" /><rect y="7" width="5.500" height="5.500" rx="1" /><rect x="7" y="7" width="5.500" height="5.500" rx="1" /></g></svg>
);
const PunctIcon = () => (
  <svg width="12" height="12" viewBox="0 0 12 12"><circle cx="3" cy="5" r="1.800" fill="currentColor" /><path d="M8 6.500h3c.3 2-.5 3.500-2 4.500L8.300 10c.7-.5 1-1 1-1.500H8z" fill="currentColor" /></svg>
);
const WindowsLogo = () => (
  <svg width="21" height="21" viewBox="0 0 21 21">
    <path d="M0 0h10v10H0z" fill="#38b6f4" /><path d="M11 0h10v10H11z" fill="#1f9be8" /><path d="M0 11h10v10H0z" fill="#1a8de0" /><path d="M11 11h10v10H11z" fill="#0a73d2" />
  </svg>
);
const SearchIcon = () => <svg width="13" height="13" viewBox="0 0 13 13"><circle cx="5.500" cy="5.500" r="4.200" fill="none" stroke="#333" strokeWidth="1.300" /><path d="M8.700 8.700L12 12" stroke="#333" strokeWidth="1.400" /></svg>;
const TaskViewIcon = () => (
  <svg width="20" height="20" viewBox="0 0 20 20"><path d="M0 5h15v14H0z" fill="#222" /><path d="M5 0h15v14H5z" fill="#fff" opacity=".75" /></svg>
);
const ExplorerIcon = () => (
  <svg width="21" height="20" viewBox="0 0 21 20">
    <path d="M0 1h8l2 2h10.500v16H0z" fill="#e2a21a" /><path d="M0 5l9 0 2-2h10v16H0z" fill="#ffd45a" />
    <path d="M4 19v-4c0-1.500 1-2.500 2.500-2.500h8c1.500 0 2.500 1 2.500 2.500v4z" fill="#1a86d8" /><path d="M6 16h9v3H6z" fill="#0c62b4" />
  </svg>
);
const WordIcon = () => (
  <svg width="21" height="20" viewBox="0 0 21 20">
    <path d="M5 0h14a1 1 0 011 1v4H4V1z" fill="#41a5ee" /><path d="M4 5h16v5H4z" fill="#2b7cd3" /><path d="M4 10h16v5H4z" fill="#185abd" /><path d="M4 15h16v4a1 1 0 01-1 1H5z" fill="#103f91" />
    <rect x="0" y="4" width="11" height="11" rx="1" fill="#185abd" /><path d="M2.500 7l1.500 5.500L5.500 8 7 12.500 8.500 7" stroke="#fff" strokeWidth="1.100" fill="none" />
  </svg>
);
const CloudIcon = () => <svg width="15" height="11" viewBox="0 0 15 11"><path d="M4 10a3 3 0 010-6 4 4 0 017-.5A3.200 3.200 0 0111.500 10z" fill="#a2a2a2" stroke="#444" /><path d="M4 9.500a3 3 0 010-3c2-1 5 0 7 3z" fill="#e8e8e8" /></svg>;
const SmileIcon = () => (
  <svg width="13" height="13" viewBox="0 0 13 13"><rect width="13" height="13" rx="2" fill="#1e86f0" /><rect x="2.500" y="2" width="10" height="10" rx="3" fill="#5fd0ff" /><path d="M5 5v1.200M10 5v1.200M5 8c1 1.600 4 1.600 5 0" stroke="#1458b8" fill="none" /></svg>
);
const WifiIcon = () => (
  <svg width="14" height="12" viewBox="0 0 14 12"><path d="M1 4.500c3.500-3.500 8.500-3.500 12 0M3 7c2.500-2.500 5.500-2.500 8 0M5 9c1.200-1.200 2.800-1.200 4 0" stroke="#333" strokeWidth="1.200" fill="none" /><circle cx="7" cy="10.500" r="1.200" fill="#333" /></svg>
);
const SpeakerIcon = () => (
  <svg width="14" height="12" viewBox="0 0 14 12"><path d="M1 4h2.500L7 1v10L3.500 8H1z" fill="none" stroke="#333" strokeWidth="1.100" /><path d="M9 4c1 1 1 3 0 4" stroke="#333" fill="none" /><path d="M11 2.500c2 2 2 5 0 7" stroke="#aaa" fill="none" /></svg>
);
const BatteryIcon = () => (
  <svg width="15" height="12" viewBox="0 0 15 12"><rect x="1.500" y="3" width="11" height="7.500" rx="1.500" fill="none" stroke="#222" strokeWidth="1.200" /><path d="M5 4.500h6.500v5H3.500z" fill="#222" /><path d="M13 5.500h1.500v3H13z" fill="#222" /><path d="M3.500 0L1 4h2l-1 3 3.500-4h-2z" fill="#222" /></svg>
);
const WeChatIcon = () => (
  <svg width="43" height="38" viewBox="0 0 43 38">
    <path d="M15 1C7 1 1 6.500 1 13.500c0 4 2 7 5 9L4.500 28l6-3c1.500.4 3 .5 4.500.5C23 25.500 30 20 30 13S23 1 15 1z" fill="#efefef" stroke="#777" strokeWidth=".6" />
    <path d="M30 13c-7 0-13 5-13 11.500S23 36 30 36c1.500 0 3 0 4-.5l5 2-1.500-4c3-2 4.500-5.500 4.500-9C42 18 37 13 30 13z" fill="#f6f6f6" stroke="#555" strokeWidth=".9" />
    <g fill="#222"><circle cx="10" cy="9.500" r="1.900" /><circle cx="20" cy="9.500" r="1.900" /><circle cx="25.500" cy="20.500" r="1.600" /><circle cx="34.500" cy="20.500" r="1.600" /></g>
  </svg>
);

/* ---------- data ---------- */

const menus: [string, string][] = [
  ['项目', 'P'], ['编辑', 'E'], ['视图', 'V'], ['插入', 'I'], ['在线', 'O'], ['选项', 'N'], ['工具', 'T'], ['窗口', 'W'], ['帮助', 'H'],
];

type Device = { name: string; level: number; open?: boolean; leaf?: boolean; on?: boolean; blue?: boolean };
const devices: Device[] = [
  { name: 'CPU', level: 0 },
  { name: 'DI', level: 0 },
  { name: 'DQ', level: 0 },
  { name: 'DI/DQ', level: 0 },
  { name: 'AI', level: 0, open: true },
  { name: 'AI 16xI BA', level: 1, open: true },
  { name: '6ES...', level: 2, leaf: true },
  { name: 'AI 16x...', level: 1 },
  { name: 'AI 4xU/...', level: 1 },
  { name: 'AI 8xU/...', level: 1 },
  { name: 'AI 8xU/...', level: 1 },
  { name: 'AI 8xU/R/', level: 1 },
  { name: 'AI 8xU/...', level: 1 },
  { name: 'AI 8xU/...', level: 1 },
  { name: 'AQ', level: 0, open: true, blue: true },
  { name: 'AQ 2x...', level: 1, open: true },
  { name: '6ES...', level: 2, leaf: true, on: true },
  { name: 'AQ 4x...', level: 1 },
  { name: 'AQ 4x...', level: 1 },
  { name: 'AQ 8x...', level: 1 },
];

const checks = [
  { label: '上溢', on: true },
  { label: '下溢', on: false },
  { label: '共模', on: true },
  { label: '断路', on: false },
];

const fields = [
  { id: 'type', label: '测量类型', value: '电流（2 线制变送器）', focus: true },
  { id: 'range', label: '测量范围', value: '4..20mA' },
  { id: 'noise', label: '干扰频率抑制', value: '50', unit: 'Hz' },
  { id: 'smooth', label: '滤波', value: '无' },
];

/* ---------- page ---------- */

const Toolbar = () => (
  <ToolRow>
    <ToolButton aria-label="新建"><NewIcon /></ToolButton>
    <ToolButton aria-label="打开"><OpenIcon /></ToolButton>
    <ToolText><SaveIcon />保存项目</ToolText>
    <ToolSep />
    <ToolButton aria-label="打印"><PrintIcon /></ToolButton>
    <ToolSep />
    <ToolButton aria-label="剪切"><CutIcon /></ToolButton>
    <ToolButton aria-label="复制"><CopyIcon /></ToolButton>
    <ToolButton aria-label="粘贴"><PasteIcon /></ToolButton>
    <ToolButton aria-label="删除"><DeleteIcon /></ToolButton>
    <ToolSep />
    <ToolButton aria-label="撤销"><UndoIcon /></ToolButton>
    <ToolButton $narrow aria-label="撤销列表"><PlusMinus /></ToolButton>
    <ToolButton aria-label="重做"><UndoIcon redo /></ToolButton>
    <ToolButton $narrow aria-label="重做列表"><PlusMinus off /></ToolButton>
    <ToolSep />
    <ToolButton aria-label="编译"><GrayTool kind="compile" /></ToolButton>
    <ToolButton aria-label="下载"><GrayTool kind="dl" /></ToolButton>
    <ToolButton aria-label="上传"><GrayTool kind="ul" /></ToolButton>
    <ToolButton aria-label="仿真"><GrayTool kind="sim" /></ToolButton>
    <ToolButton aria-label="运行系统"><GrayTool kind="rt" /></ToolButton>
    <ToolSep />
    <ToolText><PlugIcon />转至在线</ToolText>
    <ToolText $off><PlugIcon off />转至离线</ToolText>
    <ToolSep />
    <ToolButton aria-label="可访问的设备"><AccessIcon /></ToolButton>
    <ToolButton aria-label="启动 CPU"><GrayTool kind="start" /></ToolButton>
    <ToolButton aria-label="停止 CPU"><GrayTool kind="stop" /></ToolButton>
    <ToolSep />
    <ToolButton aria-label="交叉引用"><CrossRef /></ToolButton>
    <ToolSep />
    <ToolButton aria-label="水平拆分"><WinSplit /></ToolButton>
    <ToolButton aria-label="垂直拆分"><WinSplit v /></ToolButton>
    <ToolSep />
    <ProjectSearch aria-label="在项目中搜索" placeholder="<在项目中搜索>" />
    <ToolButton aria-label="搜索"><Binoc sheet /></ToolButton>
  </ToolRow>
);

const Inspector = () => (
  <InspectorBody>
    <NavTree>
      {['常规', '模块参数', '输入 0 - 15'].map((t, i) => (
        <NavItem key={t}><Tri dir="right" w={7} /><NavLabel $on={i === 1}>{t}</NavLabel></NavItem>
      ))}
    </NavTree>
    <SideSplit>
      <SideGrip aria-label="向左折叠"><Tri dir="left" w={5} /></SideGrip>
      <SideGrip aria-label="向右折叠"><Tri dir="right" w={5} /></SideGrip>
    </SideSplit>
    <Page>
      <SectionHead><Chevron dir="right" w={7} />输入<Rule /></SectionHead>
      <Panel>
        <PanelTitle>应用到使用模板的所有通道</PanelTitle>
        <SubPanel>
          <SubTitle>诊断</SubTitle>
          <CheckList>
            {checks.map(c => (
              <CheckLabel key={c.label}><CheckBox defaultChecked={c.on} />{c.label}</CheckLabel>
            ))}
          </CheckList>
        </SubPanel>
        <SubPanel>
          <SubTitle>测量</SubTitle>
          <Form>
            {fields.map(f => (
              <FormRow key={f.id}>
                <label htmlFor={f.id}>{f.label}:</label>
                <SelectBox $focus={f.focus}>
                  <Select id={f.id}><option>{f.value}</option></Select>
                  {f.unit && <Unit>{f.unit}</Unit>}
                  <DropArrow><Tri dir="down" w={7} /></DropArrow>
                </SelectBox>
              </FormRow>
            ))}
          </Form>
        </SubPanel>
      </Panel>
      <SectionHead $later>AI 组态<Rule /></SectionHead>
      <Panel><PanelTitle>子模块的组态</PanelTitle></Panel>
    </Page>
    <VScroll>
      <ScrollButton aria-label="向上"><Chevron dir="up" /></ScrollButton>
      <ScrollSpace $size={86} />
      <ScrollButton aria-label="滚动块"><Lines /></ScrollButton>
      <ScrollSpace />
      <ScrollButton aria-label="向下"><Chevron dir="down" /></ScrollButton>
    </VScroll>
  </InspectorBody>
);

const HardwareCatalog = () => (
  <Catalog>
    <CatalogHeader>硬件目录<IconSet $gap={5}><Cascade /><Columns /><Tri dir="right" w={11} /></IconSet></CatalogHeader>
    <OptionBar>选项</OptionBar>
    <OptionTools><PaneIcon /></OptionTools>
    <FoldHeader><FoldMark><Chevron dir="down" /></FoldMark>目录</FoldHeader>
    <CatalogRow>
      <CatalogSearch aria-label="搜索目录" placeholder="<搜索>" />
      <SmallButton aria-label="向下搜索"><Binoc arrow="down" /></SmallButton>
      <SmallButton aria-label="向上搜索"><Binoc arrow="up" /></SmallButton>
    </CatalogRow>
    <CatalogRow>
      <FilterLabel><CheckBox defaultChecked />过滤</FilterLabel>
      <FilterSelect>
        <Select aria-label="过滤范围"><option>&lt;全</option></Select>
        <DropArrow><Tri dir="down" w={7} /></DropArrow>
      </FilterSelect>
      <SmallButton aria-label="过滤设置"><DeviceIcon /></SmallButton>
    </CatalogRow>
    <TreeWrap>
      <DeviceTree>
        {devices.map((d, i) => (
          <DeviceRow key={i} $level={d.level}>
            {d.leaf ? <Toggle as="span" /> : <Toggle $blue={d.blue} aria-label={d.name}><Tri dir={d.open ? 'down' : 'right'} /></Toggle>}
            {d.leaf ? <ModuleIcon /> : <FolderIcon />}
            <DeviceName $on={d.on}>{d.name}</DeviceName>
          </DeviceRow>
        ))}
      </DeviceTree>
      <VScroll>
        <ScrollButton aria-label="向上"><Chevron dir="up" /></ScrollButton>
        <ScrollSpace $size={30} />
        <ScrollButton aria-label="滚动块" $size={186}><Lines /></ScrollButton>
        <ScrollSpace />
        <ScrollButton aria-label="向下"><Chevron dir="down" /></ScrollButton>
      </VScroll>
    </TreeWrap>
    <CatalogRow $low>
      <HScroll>
        <ScrollButton aria-label="向左" $size={16}><Chevron dir="left" /></ScrollButton>
        <HThumb aria-label="滚动块"><Lines v /></HThumb>
        <ScrollButton aria-label="向右" $size={16}><Chevron dir="right" /></ScrollButton>
      </HScroll>
    </CatalogRow>
    <FoldHeader><FoldMark><Chevron dir="right" /></FoldMark>信息</FoldHeader>
  </Catalog>
);

export default function App() {
  return (
    <Screen>
      <GlobalStyle />
      <DesktopEdge />
      <TitleBar>
        <TiaMark $small>TIA<b>V17</b></TiaMark>
        <WindowTitle>{'Siemens  -  D:\\项目1\\项目1'}</WindowTitle>
        <WindowButtons><Minus /><Cascade /><Cross /></WindowButtons>
      </TitleBar>
      <TopBar>
        <TopLeft>
          <MenuRow>
            {menus.map(([t, k]) => <MenuItem key={k}>{t}<small>({k})</small></MenuItem>)}
          </MenuRow>
          <Toolbar />
        </TopLeft>
        <Brand><BrandName>Totally Integrated Automation</BrandName><BrandPortal>PORTAL</BrandPortal></Brand>
      </TopBar>
      <Workspace>
        <LeftRail>
          <RailOpen aria-label="展开"><Tri dir="right" w={11} /></RailOpen>
          <RailTab><span>设备与网络</span></RailTab>
        </LeftRail>
        <Center>
          <EditorHeader>
            <Crumbs>项目1<Tri dir="right" w={7} />PLC_1 [CPU 1513-1 PN]</Crumbs>
            <IconSet><Minus /><Cascade /><Maxi /><Cross /></IconSet>
          </EditorHeader>
          <ViewBar>
            <ViewTab><TopoIcon />拓扑视图</ViewTab>
            <ViewTab><NetIcon />网络视图</ViewTab>
            <ViewTab $on><DeviceIcon />设备视图</ViewTab>
          </ViewBar>
          <SplitBar>
            <SplitGrip aria-label="向上"><Tri dir="up" w={6} /></SplitGrip>
            <SplitGrip $dim aria-label="向下"><Tri dir="down" w={5} /></SplitGrip>
          </SplitBar>
          <DataBar>设备数据</DataBar>
          <InspectorHeader>
            <InspectorTitle>AI 16xI BA_1 [AI 16xI BA]</InspectorTitle>
            <InspectorTabs>
              <InspectorTab $on><PropIcon />属性</InspectorTab>
              <InspectorTab><InfoIcon />信息<InfoDot>i</InfoDot></InspectorTab>
              <InspectorTab><DiagIcon />诊断</InspectorTab>
            </InspectorTabs>
            <HeaderTools><Cascade /><Bars /><Tri dir="down" w={11} /></HeaderTools>
          </InspectorHeader>
          <NavTabs>
            <NavTab $on>常规</NavTab>
            <NavTab>IO 变量</NavTab>
            <NavTab>系统常数</NavTab>
            <NavTab>文本</NavTab>
          </NavTabs>
          <Inspector />
        </Center>
        <HardwareCatalog />
        <TaskCards>
          <TaskCard $on><BookIcon chips /><span>硬件目录</span></TaskCard>
          <TaskCard><DiagIcon /><span>在线工具</span></TaskCard>
          <TaskCard><TaskIcon /><span>任务</span></TaskCard>
          <TaskCard $short><BookIcon /><span>库</span></TaskCard>
          <TaskCard><PaneIcon /><span>插件</span></TaskCard>
        </TaskCards>
      </Workspace>
      <PortalBar>
        <PortalLink><Tri dir="left" w={11} />Portal 视图</PortalLink>
        <EditorTab><OverviewIcon />总览</EditorTab>
        <EditorTab $on><NetIcon />PLC_1</EditorTab>
        <StatusText><OverviewIcon /><LinkIcon />项目 项目1 已打开</StatusText>
      </PortalBar>
      <TaskBar>
        <Dock>
          <DockIcon aria-label="开始"><WindowsLogo /></DockIcon>
          <SearchPill><SearchIcon />搜索</SearchPill>
          <DockIcon aria-label="任务视图"><TaskViewIcon /></DockIcon>
          <DockIcon aria-label="文件资源管理器" $mark="#7d7d7d"><ExplorerIcon /></DockIcon>
          <DockIcon aria-label="Word" $mark="#7d7d7d"><WordIcon /></DockIcon>
          <DockIcon aria-label="TIA Portal" $tile $mark="#0f78d0"><TiaMark>TIA<b>V17</b></TiaMark></DockIcon>
        </Dock>
        <Tray>
          <Chevron dir="up" w={13} thin />
          <CloudIcon />
          <SmileIcon />
          <TrayGap />
          <TrayGlyph>中</TrayGlyph>
          <TrayGap />
          <SogouIcon w={15} />
          <TrayGap />
          <WifiIcon />
          <SpeakerIcon />
          <BatteryIcon />
          <Clock>23:50<br />2023/2/22</Clock>
        </Tray>
      </TaskBar>
      <ImeBar>
        <SogouIcon w={26} />
        <ImeTools><span>中</span><PunctIcon /><MicIcon /><KeyIcon /><ShirtIcon /><AppsIcon /></ImeTools>
      </ImeBar>
      <Watermark><WeChatIcon />设备原理与维修俱乐部</Watermark>
    </Screen>
  );
}
